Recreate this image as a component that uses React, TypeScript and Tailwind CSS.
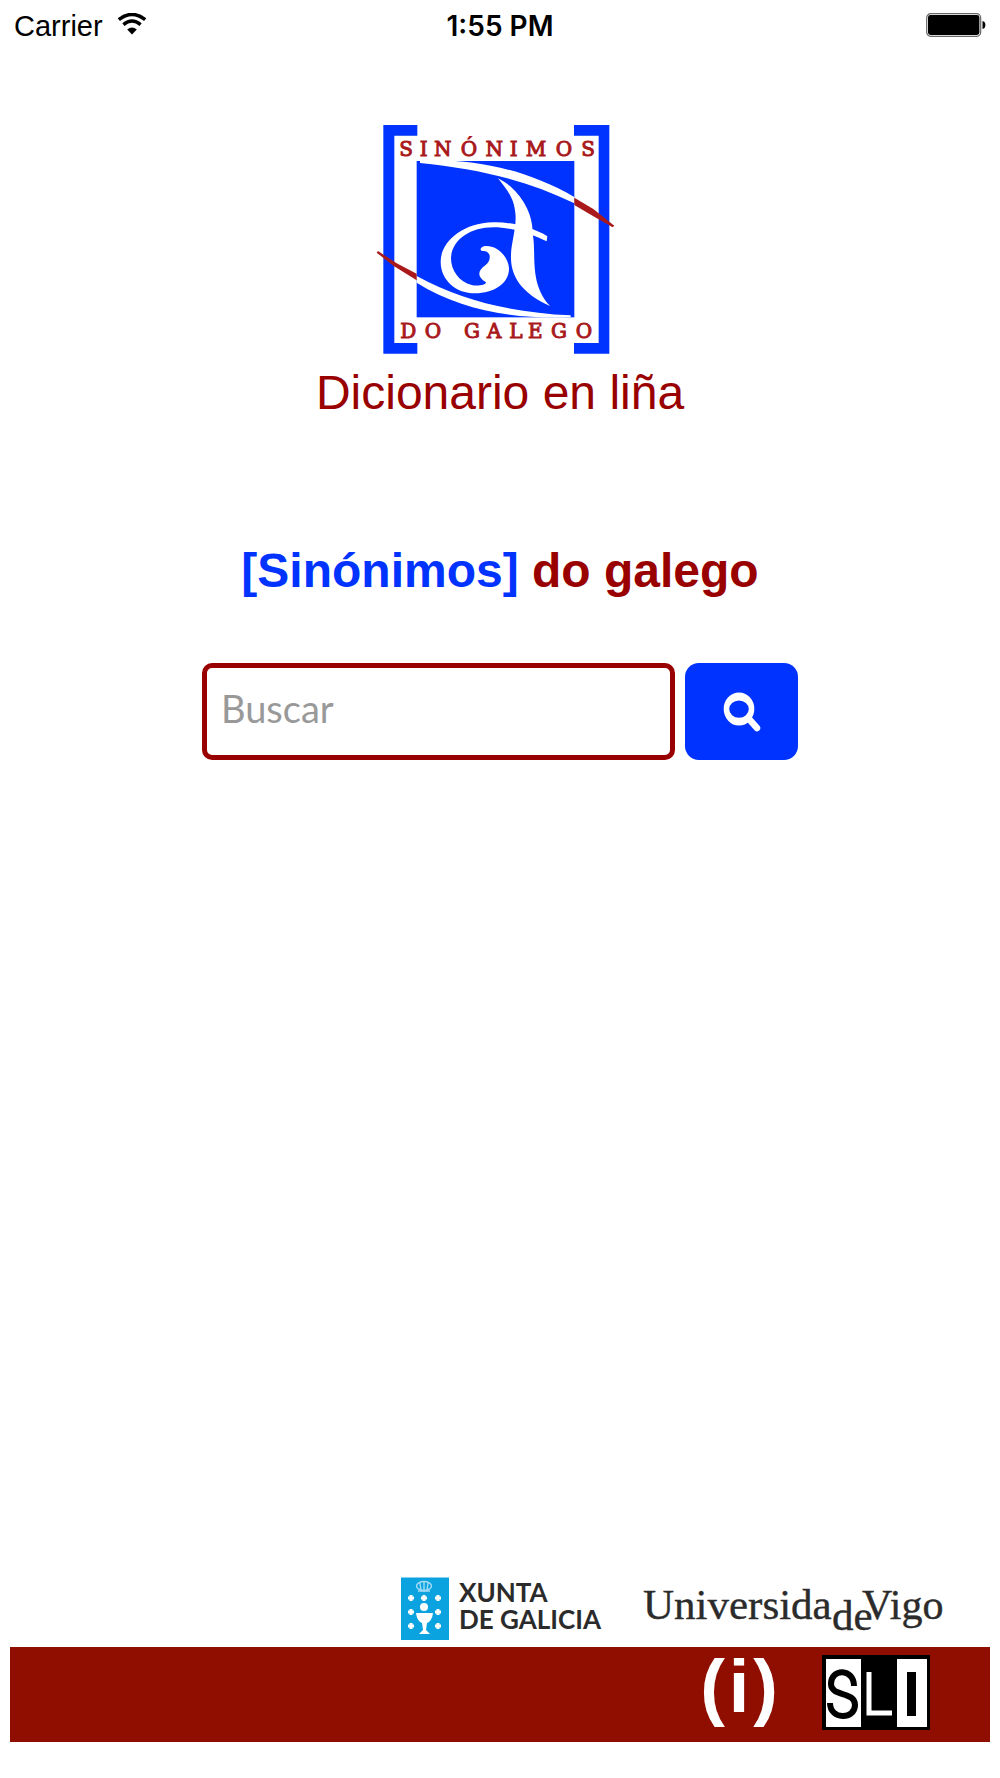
import { useState, type FormEvent } from 'react'

function StatusBar() {
  return (
    <div className="grid grid-cols-3 items-center h-13 px-3.5 text-[29px] leading-8 text-black">
      <div className="flex items-center gap-3.5">
        <span>Carrier</span>
        <svg viewBox="0 0 30 22" className="w-[30px] h-[22px] mb-1" aria-label="Wi-Fi">
          <path d="M1.8 6.6 Q15 -3.6 28.2 6.6" fill="none" stroke="black" strokeWidth="3.6" />
          <path d="M6.4 11.6 Q15 4.6 23.6 11.6" fill="none" stroke="black" strokeWidth="3.4" />
          <path d="M10.2 16.4 Q15 12.6 19.8 16.4 L15 21.6 Z" />
        </svg>
      </div>
      <span className="text-center font-[Inter,sans-serif] text-[28px] font-semibold">1:55 PM</span>
      <svg viewBox="0 0 60 24" className="w-[60px] h-6 mb-0.5 justify-self-end" aria-label="Battery">
        <rect x="0.7" y="0.7" width="54" height="22.6" rx="4" fill="white" stroke="#666" strokeWidth="1.2" />
        <rect x="2" y="2" width="51.4" height="20" rx="2.4" />
        <path d="M56.5 8 Q59.4 8.6 59.4 12 T56.5 16 Z" />
      </svg>
    </div>
  )
}

function DictionaryLogo() {
  return (
    <svg viewBox="45 45 750 690" className="w-[250px] h-[230px]" aria-label="Sinónimos do galego">
      <g fill="#0033ff">
        <path d="M70 45 H172 V77 H103 V699 H172 V731 H70 Z" />
        <path d="M748 45 H642 V77 H716 V699 H642 V731 H748 Z" />
        <rect x="170" y="153" width="473" height="469" />
      </g>
      <g fill="white">
        <path d="M180 151 C340 146 490 174 643 261 V280 C500 210 350 176 180 159 Z" />
        <path d="M170 498 C310 574 460 608 632 616 V622 C450 628 300 598 170 518 Z" />
        <path d="M414 205 C470 232 520 300 518 372 C530 430 506 520 570 588 C500 556 450 510 453 436 C453 400 471 350 466 310 C463 265 440 238 414 205 Z" />
        <path d="M562 379 C520 352 450 335 400 337 C300 340 242 400 242 455 C242 512 290 550 345 550 C402 550 448 520 447 475 C445 438 410 405 375 408 C358 411 358 425 372 423 C395 425 394 452 376 466 C353 482 350 500 378 517 C378 526 350 529 335 525 C298 516 273 482 273 445 C275 390 330 352 400 352 C460 352 520 374 560 394 Z" />
      </g>
      <g fill="#a9191c">
        <path d="M643 263 L700 297 L763 347 L758 352 L700 319 L643 285 Z" />
        <path d="M170 491 L110 460 L54 423 L50 428 L100 467 L170 511 Z" />
      </g>
      <g fill="#a9191c" stroke="#a9191c" strokeWidth="3" fontFamily="DejaVu Serif, serif" fontSize="60" textAnchor="middle">
        <text y="139" x="138 191 248 327 403 461 528 612 684">SINÓNIMOS</text>
        <text y="684" x="145 219 270 336 403 468 526 597 672">DO GALEGO</text>
      </g>
    </svg>
  )
}

function XuntaLogo() {
  return (
    <div className="flex gap-[10px] w-[206px]">
      <svg viewBox="0 0 48 64" className="w-12 h-16 shrink-0" aria-hidden="true">
        <rect y="0.5" width="48" height="62.5" fill="#0aa3e0" />
        <g fill="none" stroke="#a5dcf4" strokeWidth="1.4">
          <ellipse cx="23" cy="9" rx="7.5" ry="4.5" />
          <path d="M17 14 H29 M23 4 V13 M19 6 L20 13 M27 6 L26 13" />
        </g>
        <g fill="white">
          <circle cx="23" cy="30" r="4" />
          <path d="M15 36 H32 Q31 44 26 46 L25 53 L29 57 H18 L22 53 L21 46 Q16 44 15 36 Z" />
        </g>
        <path
          d="M10 18 V24 M7 21 H13 M23 18 V24 M20 21 H26 M37 18 V24 M34 21 H40 M10 32 V38 M7 35 H13 M37 32 V38 M34 35 H40 M10 46 V52 M7 49 H13 M37 46 V52 M34 49 H40"
          stroke="white"
          strokeWidth="3"
        />
      </svg>
      <p className="pt-0.5 font-[Lato,sans-serif] text-[26px] leading-[27px] font-bold text-[#2b2b2b] whitespace-nowrap">
        XUNTA<br />DE GALICIA
      </p>
    </div>
  )
}

function VigoLogo() {
  return (
    <svg viewBox="0 0 302 64" className="w-[302px] h-16" aria-label="Universidade Vigo">
      <g fill="#2b2b2b" stroke="#2b2b2b" strokeWidth="0.4" fontFamily="Liberation Serif, serif" fontSize="43">
        <text x="0" y="42">Universida</text>
        <text x="189" y="53" fontSize="43">de</text>
        <text x="219" y="42" fontSize="42">Vigo</text>
      </g>
    </svg>
  )
}

function SliLogo() {
  return (
    <svg viewBox="0 0 108 75" className="w-[108px] h-[75px]" aria-hidden="true">
      <rect width="108" height="75" />
      <rect x="4" y="4" width="35" height="68" fill="white" />
      <rect x="75" y="4" width="30" height="68" fill="white" />
      <path d="M32 31 C32 13 9 13 9 29 C9 42 33 36 33 50 C33 65 8 65 8 48" fill="none" stroke="black" strokeWidth="6" />
      <path d="M47 17 V58 H70" fill="none" stroke="white" strokeWidth="5" />
      <rect x="85" y="17" width="9" height="44" />
    </svg>
  )
}

function SearchForm() {
  const [query, setQuery] = useState("")

  function handleSubmit(e: FormEvent) {
    e.preventDefault()
    setQuery(query.trim())
  }

  return (
    <form onSubmit={handleSubmit} className="flex gap-[10px] w-full max-w-[596px] mt-16">
      <input
        type="text"
        aria-label="Buscar"
        placeholder="Buscar"
        value={query}
        onChange={e => setQuery(e.target.value)}
        className="flex-1 min-w-0 h-[97px] px-3.5 pb-2 rounded-[10px] border-5 border-[#990000] bg-white font-[Lato,sans-serif] text-[38px] placeholder:text-[#999999] outline-none"
      />
      <button type="submit" aria-label="Buscar" className="flex items-center justify-center w-[113px] h-[97px] rounded-[14px] bg-[#0033ff] cursor-pointer">
        <svg viewBox="0 0 38 40" className="w-[38px] h-10">
          <path fillRule="evenodd" fill="white" d="M16 0.5 A15.3 16.5 0 1 0 16 33.5 A15.3 16.5 0 1 0 16 0.5 Z M16 8.5 A9.8 8.6 0 1 1 16 25.7 A9.8 8.6 0 1 1 16 8.5 Z" />
          <path d="M26 27 L34 36" stroke="white" strokeWidth="6.5" strokeLinecap="round" />
        </svg>
      </button>
    </form>
  )
}

export default function App() {
  return (
    <div className="flex flex-col min-h-screen bg-white font-['Liberation_Sans',Arial,sans-serif]">
      <StatusBar />
      <main className="flex flex-col items-center pt-[73px]">
        <DictionaryLogo />
        <p className="mt-[10px] text-5xl leading-14 text-[#990000]">Dicionario en liña</p>
        <h1 className="mt-[122px] text-5xl leading-14 font-bold text-[#990000]">
          <span className="text-[#0033ff]">[Sinónimos]</span> do galego
        </h1>
        <SearchForm />
      </main>
      <footer className="mt-auto px-[10px] pb-9">
        <div className="flex justify-end gap-9 pr-[45px] pb-1.5">
          <XuntaLogo />
          <VigoLogo />
        </div>
        <div className="flex items-center justify-end gap-11 h-[95px] pr-15 pb-1 bg-[#8f0e00]">
          <a href="#info" className="flex gap-1 pb-3 text-[74px] leading-[76px] font-bold text-white">
            <span>(</span><span>i</span><span>)</span>
          </a>
          <a href="#sli" aria-label="SLI"><SliLogo /></a>
        </div>
      </footer>
    </div>
  )
}
